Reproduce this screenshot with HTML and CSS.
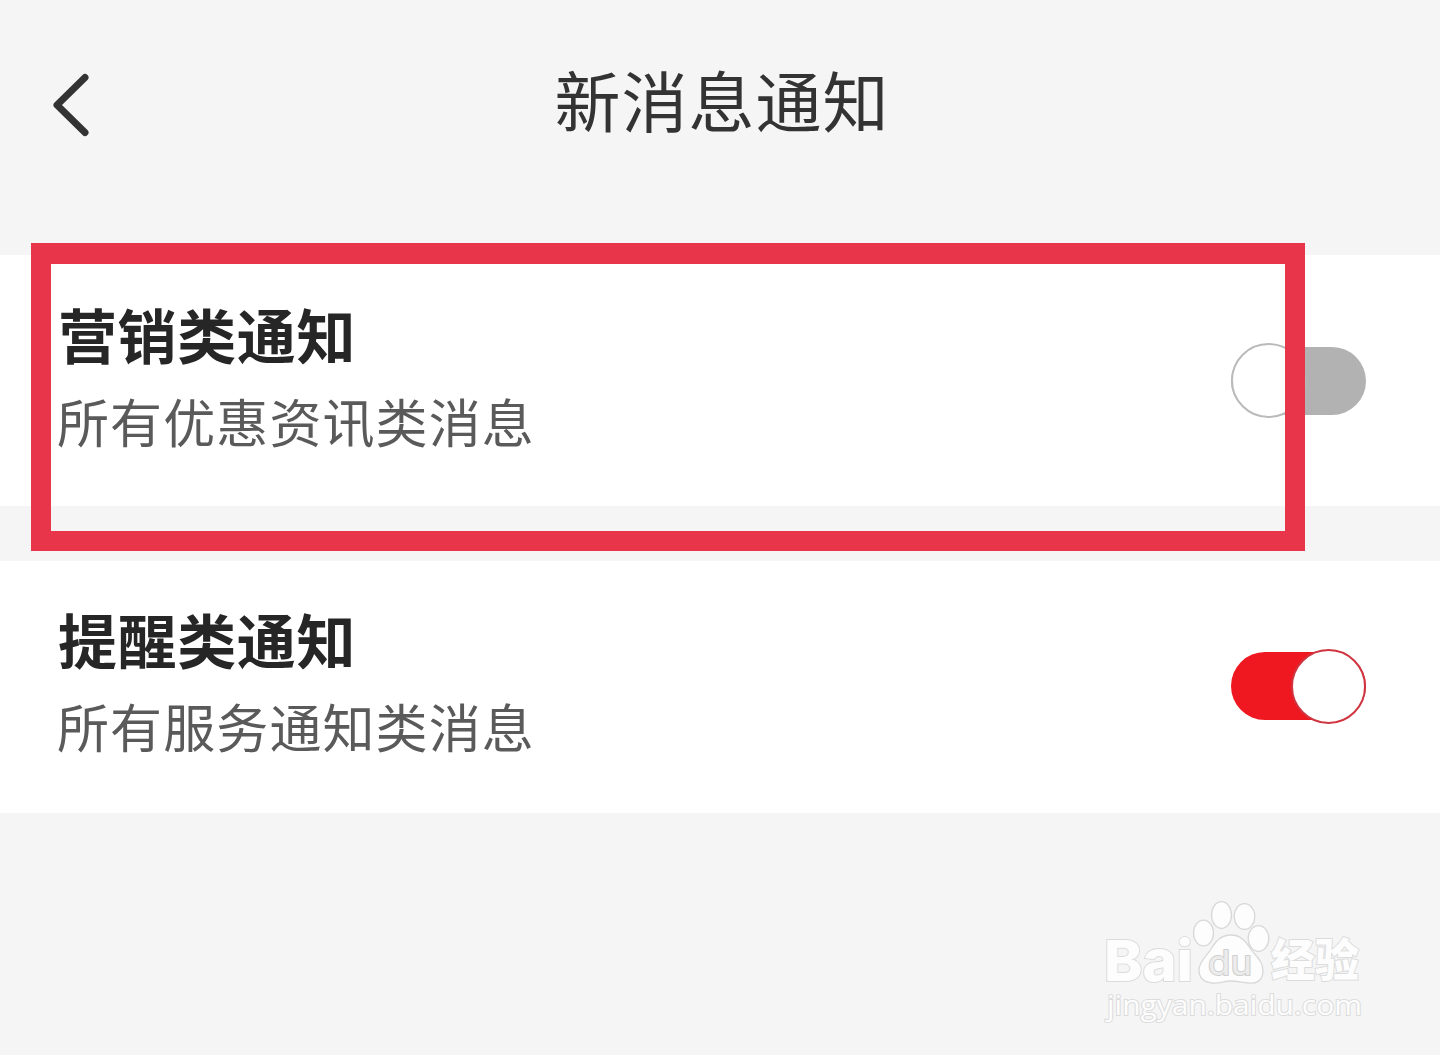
FILE: index.html
```html
<!DOCTYPE html>
<html lang="zh-CN">
<head>
    <meta charset="UTF-8">
    <meta name="viewport" content="width=device-width, initial-scale=1.0">
    <title>新消息通知</title>
    <link rel="stylesheet" href="styles.css">
</head>
<body>

    <header class="header">
        <a href="#" class="back" aria-label="返回">
            <svg width="40" height="66" viewBox="0 0 40 66">
                <path d="M34 5.5L6 33L34 60.5"/>
            </svg>
        </a>
        <h1>新消息通知</h1>
    </header>

    <main class="list">
        <section class="row">
            <div class="row-text">
                <h2>营销类通知</h2>
                <p>所有优惠资讯类消息</p>
            </div>
            <div class="switch"><span class="knob"></span></div>
            <div class="highlight"></div>
        </section>

        <section class="row">
            <div class="row-text">
                <h2>提醒类通知</h2>
                <p>所有服务通知类消息</p>
            </div>
            <div class="switch on"><span class="knob"></span></div>
        </section>
    </main>

    <footer class="footer">
        <svg class="watermark" width="270" height="130" viewBox="0 0 270 130">
            <text class="logo" x="4" y="82.500" font-size="57" textLength="89" lengthAdjust="spacingAndGlyphs">Bai</text>
            <g class="paw">
                <ellipse cx="103.5" cy="35" rx="10" ry="12.8"/>
                <ellipse cx="121.5" cy="17" rx="10" ry="13.3"/>
                <ellipse cx="144.5" cy="18.5" rx="10.3" ry="12.8"/>
                <ellipse cx="158.5" cy="40.5" rx="10.3" ry="12.8"/>
                <path d="M131 37C141 37 146 44 150 50C155 58 163 62 163 73C163 83 156 86 148 85C140 84 137 83 130 83C124 83 119 86 112 85C103 84 99 79 99 72C99 63 107 58 111 51C116 43 121 37 131 37Z"/>
            </g>
            <text class="du" x="108" y="76.500" font-size="34" textLength="44" lengthAdjust="spacingAndGlyphs">du</text>
            <text class="logo cn" x="171" y="79" font-size="45" textLength="88" lengthAdjust="spacingAndGlyphs">经验</text>
            <text class="site" x="7" y="117" font-size="28" textLength="255" lengthAdjust="spacingAndGlyphs">jingyan.baidu.com</text>
        </svg>
    </footer>

</body>
</html>
```

FILE: styles.css
```css
* {
    box-sizing: border-box;
}
body {
    margin: 0;
    background: #f5f5f5;
    font-family: "Noto Sans CJK SC", sans-serif;
}
h1, h2, p {
    margin: 0;
}
.header {
    display: grid;
    grid-template-columns: 90px 1fr 90px;
    align-items: center;
    height: 255px;
    padding: 0 0 46px;
}
.back {
    display: flex;
    justify-content: flex-end;
}
.back svg {
    margin-right: -1px;
    fill: none;
    stroke: #333;
    stroke-width: 7;
    stroke-linecap: round;
    stroke-linejoin: round;
}
.header h1 {
    font-size: 66px;
    font-weight: 400;
    line-height: 80px;
    letter-spacing: 1px;
    text-align: center;
    color: #333;
    margin-top: -13px;
    padding-left: 4px;
}
.list {
    display: flex;
    flex-direction: column;
    gap: 55px;
}
.row {
    position: relative;
    display: flex;
    justify-content: space-between;
    align-items: center;
    height: 251px;
    padding: 0 74px 0 57px;
    background: #fff;
}
.row:last-child {
    height: 252px;
    padding-bottom: 2px;
}
.row h2 {
    font-size: 59px;
    font-weight: 700;
    line-height: 84px;
    letter-spacing: 0.6px;
    color: #262626;
    padding-left: 1px;
}
.row p {
    font-size: 52px;
    line-height: 90px;
    letter-spacing: 1.1px;
    color: #5a5a5a;
}
.row-text {
    padding-bottom: 4px;
}
.switch {
    display: flex;
    align-items: center;
    width: 135px;
    height: 68px;
    border-radius: 34px;
    background: #b2b2b2;
}
.knob {
    flex: none;
    width: 75px;
    height: 75px;
    border: 2px solid #bababa;
    border-radius: 50%;
    background: #fff;
}
.switch.on {
    justify-content: flex-end;
    background: #ef1820;
}
.switch.on .knob {
    border-color: #cf3540;
}
/* red frame over the first row */
.highlight {
    position: absolute;
    z-index: 1;
    top: -12px;
    left: 31px;
    width: 1274px;
    height: 308px;
    border: 20px solid #e93549;
    border-top-width: 21px;
}
.footer {
    display: flex;
    justify-content: flex-end;
    height: 242px;
    padding: 85px 70px 0 0;
}
.watermark text {
    font-family: "Open Sans", "Noto Sans", sans-serif;
    fill: #fdfdfd;
    stroke: #dcdcdc;
    stroke-width: 2px;
    paint-order: stroke;
}
.watermark .logo {
    font-family: Inter, sans-serif;
    font-weight: 800;
}
.watermark .cn {
    font-family: "Noto Sans CJK SC", sans-serif;
}
.watermark .du {
    font-family: Inter, sans-serif;
    font-weight: 400;
    fill: #ececec;
    stroke: #cfcfcf;
}
.paw {
    fill: #fdfdfd;
    stroke: #d8d8d8;
    stroke-width: 1.3;
}
```
